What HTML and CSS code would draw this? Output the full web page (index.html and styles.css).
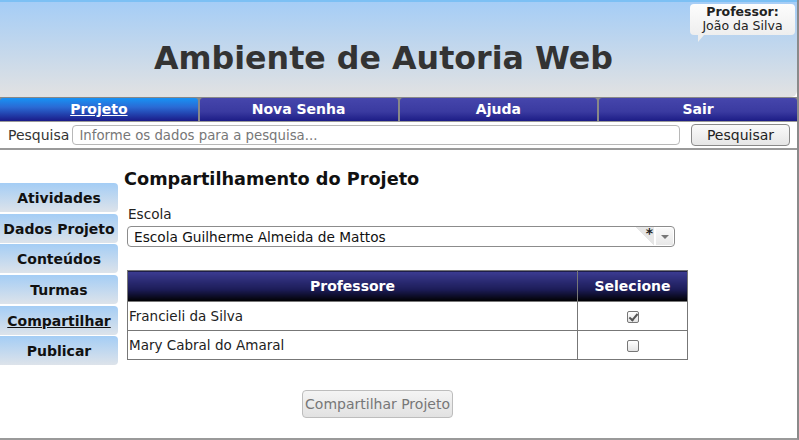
FILE: index.html
```html
<!DOCTYPE html>
<html lang="pt">
<head>
<meta charset="utf-8">
<title>Ambiente de Autoria Web</title>
<link rel="stylesheet" href="styles.css">
</head>
<body>
<div class="page">
  <header class="header">
    <h1 class="title">Ambiente de Autoria Web</h1>
    <div class="user">
      <div class="user-role">Professor:</div>
      <div class="user-name">João da Silva</div>
    </div>
  </header>
  <nav class="nav">
    <a class="tab active" href="#">Projeto</a>
    <a class="tab" href="#">Nova Senha</a>
    <a class="tab" href="#">Ajuda</a>
    <a class="tab" href="#">Sair</a>
  </nav>
  <div class="search">
    <label class="search-label">Pesquisa</label>
    <input class="search-input" type="text" placeholder="Informe os dados para a pesquisa...">
    <button class="search-btn">Pesquisar</button>
  </div>
  <div class="body">
    <aside class="side">
      <a class="side-item" href="#">Atividades</a>
      <a class="side-item" href="#">Dados Projeto</a>
      <a class="side-item" href="#">Conteúdos</a>
      <a class="side-item" href="#">Turmas</a>
      <a class="side-item current" href="#">Compartilhar</a>
      <a class="side-item" href="#">Publicar</a>
    </aside>
    <main class="main">
      <h2 class="heading">Compartilhamento do Projeto</h2>
      <div class="field-label">Escola</div>
      <div class="select">
        <span class="select-text">Escola Guilherme Almeida de Mattos</span>
        <span class="select-fold"></span>
        <span class="select-star">*</span>
        <span class="select-arrow"></span>
      </div>
      <table class="grid">
        <thead>
          <tr><th class="col-name">Professore</th><th class="col-sel">Selecione</th></tr>
        </thead>
        <tbody>
          <tr><td>Francieli da Silva</td><td class="cell-check"><input class="check" type="checkbox" checked></td></tr>
          <tr><td>Mary Cabral do Amaral</td><td class="cell-check"><input class="check" type="checkbox"></td></tr>
        </tbody>
      </table>
      <div class="actions">
        <button class="share-btn" disabled>Compartilhar Projeto</button>
      </div>
    </main>
  </div>
</div>
</body>
</html>
```

FILE: styles.css
```css
* { box-sizing: border-box; }
html, body { margin: 0; padding: 0; background: #fff; }
body { font-family: "DejaVu Sans", Verdana, sans-serif; color: #222; }

.page {
  width: 799px;
  height: 440px;
  border-right: 2px solid #8a8a8a;
  border-bottom: 2px solid #9a9a9a;
  display: flex;
  flex-direction: column;
}

.header {
  position: relative;
  height: 97px;
  border-top: 2px solid #7cc0f4;
  background: linear-gradient(#a5cdf6, #e2e2e2);
  border-bottom-right-radius: 6px;
  display: flex;
  align-items: center;
  justify-content: center;
}
.title {
  margin: 17px 30px 0 0;
  font-size: 31.7px;
  font-weight: bold;
  color: #333;
}
.user {
  position: absolute;
  top: 2px;
  right: 2px;
  width: 105px;
  height: 31px;
  background: linear-gradient(#fdfdfd, #eeeeee);
  border-radius: 4px;
  text-align: center;
  font-size: 12.5px;
  line-height: 14px;
  padding-top: 1px;
  color: #222;
}
.user::after {
  content: "";
  position: absolute;
  left: 8px;
  bottom: -7px;
  border-left: 6px solid #eeeeee;
  border-bottom: 7px solid transparent;
}
.user-role { font-weight: bold; }

.nav {
  display: flex;
  height: 25px;
  background: #888;
  gap: 2px;
  border-top: 1px solid #888;
  border-bottom: 1px solid #999;
}
.tab {
  flex: 1;
  color: #fff;
  font-weight: bold;
  font-size: 14px;
  text-align: center;
  line-height: 23px;
  text-decoration: none;
  background: linear-gradient(#4646ac 0%, #3a3aa0 60%, #1c1c86 100%);
  border-radius: 3px 3px 0 0;
}
.tab.active {
  text-decoration: underline;
  background: linear-gradient(#1892f4 0%, #2a6ad4 40%, #1a1a88 100%);
}

.search {
  height: 28px;
  display: flex;
  align-items: center;
  padding: 0 7px 0 8px;
  border-bottom: 2px solid #9a9a9a;
}
.search-label { color: #333; margin-right: 3px; font-size: 14px; }
.search-input {
  width: 608px;
  height: 20px;
  border: 1px solid #b8b8b8;
  border-radius: 4px;
  font-family: inherit;
  font-size: 13.3px;
  padding: 0 6px;
  color: #333;
}
.search-input::placeholder { color: #777; }
.search-btn {
  margin-left: auto;
  width: 99px;
  height: 22px;
  border: 1px solid #8a8a8a;
  border-radius: 4px;
  background: linear-gradient(#fafafa, #e6e6e6);
  font-family: inherit;
  font-size: 14px;
  color: #222;
  padding: 0;
}

.body {
  flex: 1;
  display: flex;
}
.side {
  width: 118px;
  padding-top: 33px;
  display: flex;
  flex-direction: column;
  gap: 1.7px;
}
.side-item {
  height: 29px;
  line-height: 30px;
  text-align: center;
  font-weight: bold;
  font-size: 14px;
  color: #111;
  text-decoration: none;
  background: linear-gradient(#a4cdf5, #dde3ea);
  border-radius: 0 4px 4px 0;
}
.side-item.current { text-decoration: underline; }

.main {
  flex: 1;
  padding: 19px 0 0 6px;
}
.heading {
  margin: 0 0 17px 0;
  font-size: 17.7px;
  font-weight: bold;
  color: #111;
}
.field-label {
  margin-left: 4px;
  font-size: 13.6px;
  color: #222;
  line-height: 16px;
}
.select {
  position: relative;
  margin: 4px 0 0 3px;
  width: 548px;
  height: 21px;
  border: 1px solid #8c8c8c;
  border-radius: 4px;
  font-size: 13.7px;
  line-height: 20px;
  padding-left: 6px;
  color: #111;
}
.select-fold {
  position: absolute;
  right: 20px;
  top: 0;
  width: 18px;
  height: 19px;
  background: linear-gradient(45deg, transparent 50%, #e6e6e6 50%);
}
.select-star {
  position: absolute;
  right: 21px;
  top: -4px;
  font-size: 14px;
  font-weight: bold;
  color: #222;
}
.select-arrow {
  position: absolute;
  right: 1px;
  top: 1px;
  width: 17px;
  height: 17px;
  background: linear-gradient(#fafafa, #e8e8e8);
}
.select-arrow::after {
  content: "";
  position: absolute;
  left: 5px;
  top: 7px;
  border-left: 4px solid transparent;
  border-right: 4px solid transparent;
  border-top: 4px solid #777;
}

.grid {
  margin: 23px 0 0 3px;
  width: 561px;
  border-collapse: collapse;
  font-size: 13.5px;
}
.grid th {
  height: 31px;
  color: #fff;
  font-weight: bold;
  font-size: 14px;
  background: linear-gradient(#3c3c92, #1c1c58 60%, #000);
  border: 1px solid #777;
  padding: 0;
}
.grid .col-name { width: 450px; }
.grid td {
  height: 29px;
  border: 1px solid #777;
  padding: 0 1px;
  color: #222;
}
.grid .cell-check { text-align: center; padding: 0; }
.check {
  appearance: none;
  -webkit-appearance: none;
  position: relative;
  margin: 0;
  width: 12px;
  height: 12px;
  border: 1px solid #777;
  border-radius: 2px;
  background: linear-gradient(#ffffff, #e4e4e4);
  vertical-align: middle;
}
.check:checked::after {
  content: "";
  position: absolute;
  left: 3px;
  top: 0px;
  width: 3px;
  height: 7px;
  border-right: 2px solid #555;
  border-bottom: 2px solid #555;
  transform: rotate(40deg);
}

.actions {
  margin-top: 30px;
  padding-left: 178px;
}
.share-btn {
  width: 151px;
  height: 28px;
  border: 1px solid #bdbdbd;
  border-radius: 4px;
  background: linear-gradient(#f4f4f4, #e2e2e2);
  font-family: inherit;
  font-size: 14px;
  color: #777;
  padding: 0;
}
```
